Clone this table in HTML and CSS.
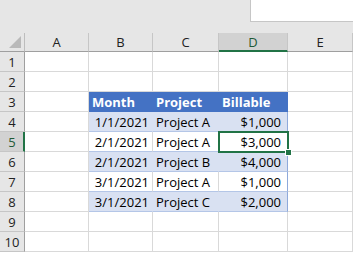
FILE: index.html
```html
<!DOCTYPE html>
<html>
<head>
<meta charset="utf-8">
<link rel="stylesheet" href="styles.css">
</head>
<body>
<div class="top">
  <div class="namebox"></div>
</div>
<div class="sheet">
  <div class="grid">
    <div class="corner"><span class="tri"></span></div>
    <div class="ch">A</div><div class="ch">B</div><div class="ch">C</div><div class="ch sel-col">D</div><div class="ch">E</div>

    <div class="rh">1</div><div class="c"></div><div class="c"></div><div class="c"></div><div class="c"></div><div class="c"></div>
    <div class="rh">2</div><div class="c"></div><div class="c"></div><div class="c"></div><div class="c"></div><div class="c"></div>

    <div class="rh">3</div><div class="c"></div>
    <div class="c th">Month</div><div class="c th">Project</div><div class="c th">Billable</div><div class="c"></div>

    <div class="rh">4</div><div class="c"></div>
    <div class="c tb band r">1/1/2021</div><div class="c tb band">Project A</div><div class="c tb band r last">$1,000</div><div class="c"></div>

    <div class="rh sel-row">5</div><div class="c"></div>
    <div class="c tb r">2/1/2021</div><div class="c tb">Project A</div><div class="c tb r last">$3,000</div><div class="c"></div>

    <div class="rh">6</div><div class="c"></div>
    <div class="c tb band r">2/1/2021</div><div class="c tb band">Project B</div><div class="c tb band r last">$4,000</div><div class="c"></div>

    <div class="rh">7</div><div class="c"></div>
    <div class="c tb r">3/1/2021</div><div class="c tb">Project A</div><div class="c tb r last">$1,000</div><div class="c"></div>

    <div class="rh">8</div><div class="c"></div>
    <div class="c tb band r">3/1/2021</div><div class="c tb band">Project C</div><div class="c tb band r last">$2,000</div><div class="c"></div>

    <div class="rh">9</div><div class="c"></div><div class="c"></div><div class="c"></div><div class="c"></div><div class="c"></div>
    <div class="rh">10</div><div class="c"></div><div class="c"></div><div class="c"></div><div class="c"></div><div class="c"></div>
  </div>
  <div class="selection"><span class="handle"></span></div>
</div>
</body>
</html>
```
FILE: styles.css
```css
html, body {
  margin: 0;
  padding: 0;
  background: #ffffff;
  overflow: hidden;
}
body {
  font-family: "Open Sans", "Liberation Sans", sans-serif;
  font-size: 13px;
  color: #000;
  width: 353px;
  height: 254px;
}
.top {
  height: 33px;
  background: #e6e6e6;
  display: flex;
  justify-content: flex-end;
  align-items: flex-start;
}
.namebox {
  width: 102px;
  height: 21px;
  background: #ffffff;
  border-left: 1px solid #c6c6c6;
  border-bottom: 1px solid #c6c6c6;
}
.sheet {
  position: relative;
}
.grid {
  display: grid;
  grid-template-columns: 25px 64px 64px 66px 69px 65px;
  grid-template-rows: 19px repeat(10, 20px);
}
.grid > div {
  box-sizing: border-box;
  line-height: 20px;
  white-space: nowrap;
  overflow: hidden;
}
.corner {
  background: #e6e6e6;
  border-right: 1px solid #bdbdbd;
  border-bottom: 1px solid #9f9f9f;
  display: flex;
  justify-content: flex-end;
  align-items: flex-end;
  padding: 0 3px 3px 0;
}
.tri {
  width: 0;
  height: 0;
  border-left: 12px solid transparent;
  border-bottom: 12px solid #b9b9b9;
}
.grid > .ch {
  background: #e6e6e6;
  border-right: 1px solid #c6c6c6;
  border-bottom: 1px solid #9f9f9f;
  text-align: center;
  color: #222;
  line-height: 19px;
}
.grid > .ch.sel-col {
  background: #d2d2d2;
  border-bottom: 2px solid #217346;
  color: #1e5a36;
  line-height: 18px;
}
.rh {
  background: #e6e6e6;
  border-right: 1px solid #9f9f9f;
  border-bottom: 1px solid #c6c6c6;
  text-align: center;
  color: #222;
}
.rh.sel-row {
  background: #d2d2d2;
  border-right: 2px solid #217346;
  color: #1e5a36;
  padding-left: 1px;
}
.c {
  border-right: 1px solid #d9d9d9;
  border-bottom: 1px solid #d9d9d9;
  padding: 0 3px;
}
.th {
  background: #4472c4;
  color: #ffffff;
  font-weight: bold;
  border-right-color: #4472c4;
  border-bottom-color: #4472c4;
}
.th:last-child, .tb.last {
  border-right-color: #8ea9db;
}
.tb {
  border-bottom-color: #b4c6e7;
  border-right-color: #d9d9d9;
}
.tb.band {
  background: #d9e1f2;
  border-right-color: #d9e1f2;
}
.tb.band.last {
  border-right-color: #8ea9db;
}
.r {
  text-align: right;
}
.tb.last {
  padding-right: 6px;
}
.selection {
  position: absolute;
  left: 218px;
  top: 98px;
  width: 67px;
  height: 18px;
  border: 2px solid #217346;
}
.handle {
  position: absolute;
  right: -5px;
  bottom: -5px;
  width: 5px;
  height: 5px;
  background: #217346;
  border: 1px solid #ffffff;
}
```
